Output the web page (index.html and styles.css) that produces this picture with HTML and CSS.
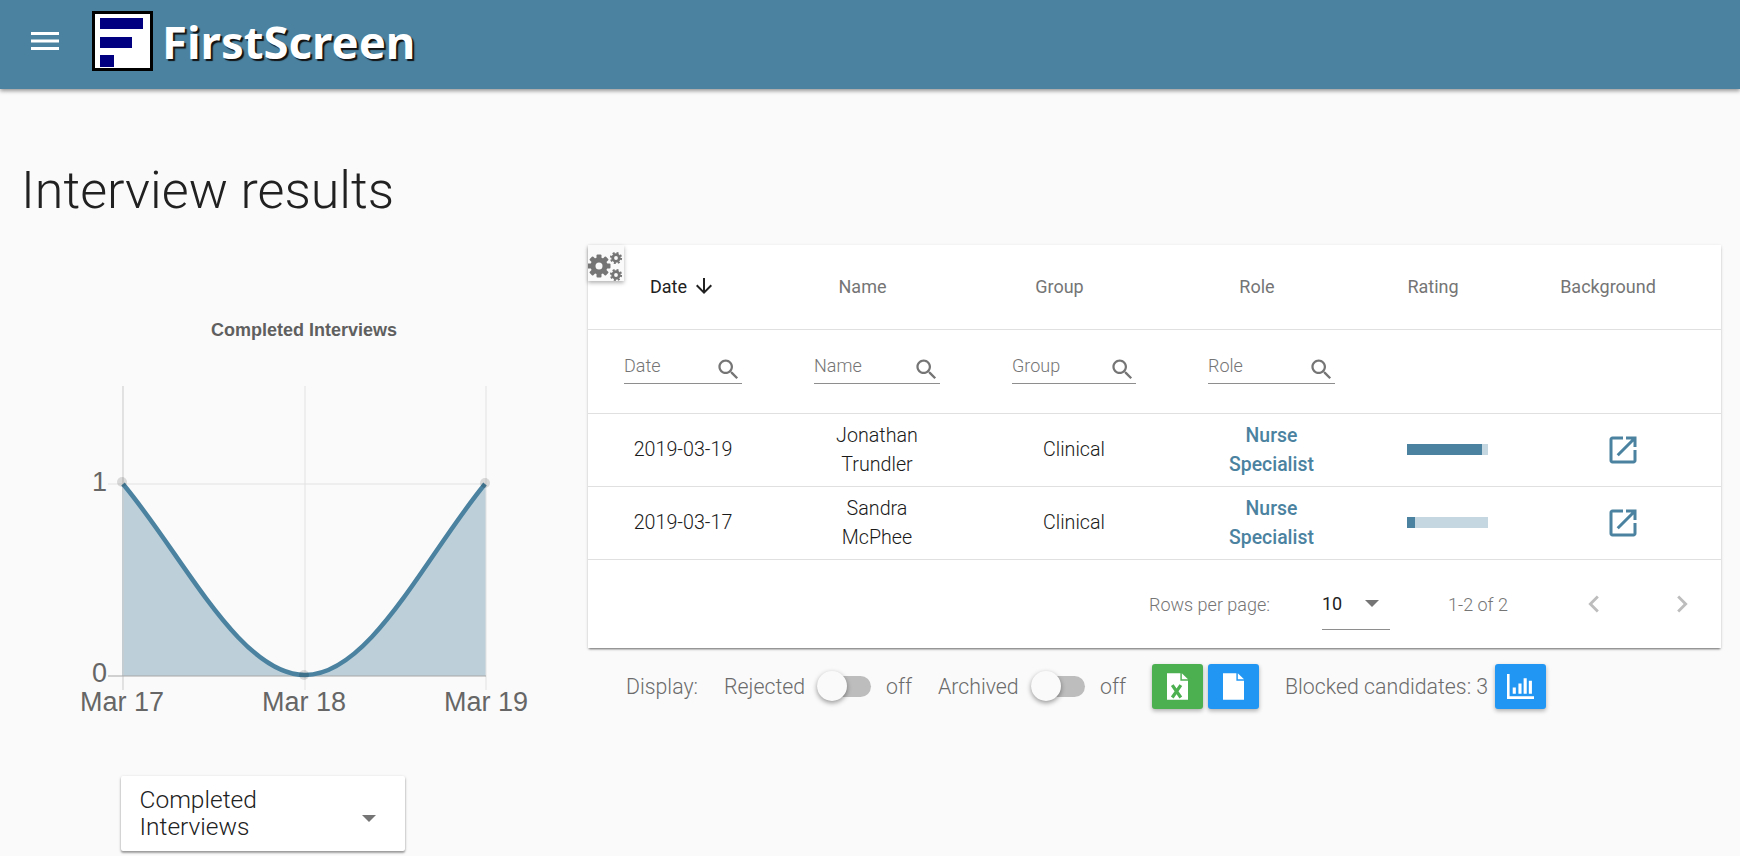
FILE: index.html
```html
<!DOCTYPE html>
<html lang="en">
<head>
<meta charset="utf-8">
<title>Interview results</title>
<link rel="stylesheet" href="styles.css">
</head>
<body>
<header class="appbar">
  <svg class="menu-icon" viewBox="0 0 28 18" aria-hidden="true"><path d="M0 0h28v3H0zM0 7.500h28v3H0zM0 15h28v3H0z" fill="#fff"/></svg>
  <div class="logo-box">
    <svg viewBox="0 0 61 60" class="logo-mark" aria-hidden="true"><rect x="1.500" y="1.500" width="58" height="57" fill="#fff" stroke="#000" stroke-width="3"/><path d="M8 7h43v11H8zM8 26h32v11H8zM8 44h14v12H8z" fill="#000080"/></svg>
  </div>
  <span class="logo-text">FirstScreen</span>
</header>
<main class="page">
  <h1 class="page-title">Interview results</h1>
  <div class="content">
    <section class="chart-col">
      <svg class="chart" viewBox="0 245 588 520" aria-label="Completed Interviews chart">
        <text x="304" y="336" class="chart-title" text-anchor="middle">Completed Interviews</text>
        <path d="M122 484C184 557 240 676 305 676C370 676 425 557 486 484V676H122Z" fill="#bdd0da"/>
        <path d="M123 386V690" stroke="#c9c9c9"/>
        <path d="M305 386V690M486 386V690" stroke="#e2e2e2"/>
        <path d="M108 484H486" stroke="#e2e2e2"/>
        <path d="M108 676H486" stroke="#a6a6a6"/>
        <path d="M123 484C184 557 240 675 305 675C370 675 425 557 485 484" fill="none" stroke="#4a82a0" stroke-width="4.500"/>
        <circle cx="122" cy="482" r="5" fill="#000" fill-opacity=".13"/>
        <circle cx="304" cy="675" r="5" fill="#000" fill-opacity=".13"/>
        <circle cx="485" cy="483" r="5" fill="#000" fill-opacity=".13"/>
        <text x="107" y="491" class="axis" text-anchor="end">1</text>
        <text x="107" y="682" class="axis" text-anchor="end">0</text>
        <text x="122" y="711" class="axis" text-anchor="middle">Mar 17</text>
        <text x="304" y="711" class="axis" text-anchor="middle">Mar 18</text>
        <text x="486" y="711" class="axis" text-anchor="middle">Mar 19</text>
      </svg>
      <div class="metric-select">
        <span class="metric-label">Completed Interviews</span>
        <span class="caret"></span>
      </div>
    </section>
    <section class="table-col">
      <div class="card">
        <button class="gear-btn" type="button" aria-label="Settings">
          <svg viewBox="0 0 36 36" aria-hidden="true">
            <g fill="#757575">
              <circle cx="11" cy="21" r="8.500"/>
              <rect x="8.500" y="9.500" width="5" height="23" rx="1"/>
              <rect x="8.500" y="9.500" width="5" height="23" rx="1" transform="rotate(45 11 21)"/>
              <rect x="8.500" y="9.500" width="5" height="23" rx="1" transform="rotate(90 11 21)"/>
              <rect x="8.500" y="9.500" width="5" height="23" rx="1" transform="rotate(135 11 21)"/>
            </g>
            <circle cx="11" cy="21" r="3.500" fill="#fafafa"/>
            <circle cx="28" cy="13" r="3.300" fill="none" stroke="#757575" stroke-width="2.800"/>
            <circle cx="28" cy="13" r="5.100" fill="none" stroke="#757575" stroke-width="2" stroke-dasharray="2 2"/>
            <circle cx="28" cy="30" r="3.300" fill="none" stroke="#757575" stroke-width="2.800"/>
            <circle cx="28" cy="30" r="5.100" fill="none" stroke="#757575" stroke-width="2" stroke-dasharray="2 2"/>
          </svg>
        </button>
        <table class="grid">
          <colgroup>
            <col class="c-date"><col class="c-name"><col class="c-group"><col class="c-role"><col class="c-rating"><col class="c-bg">
          </colgroup>
          <thead>
            <tr class="head-row">
              <th class="active"><span class="th-in">Date<svg class="sort" viewBox="0 0 24 24" aria-hidden="true"><path d="M20 12l-1.410-1.410L13 16.170V4h-2v12.170l-5.580-5.590L4 12l8 8 8-8z"/></svg></span></th>
              <th><span class="th-in">Name<span class="sort-gap"></span></span></th>
              <th><span class="th-in">Group<span class="sort-gap"></span></span></th>
              <th><span class="th-in">Role<span class="sort-gap"></span></span></th>
              <th><span class="th-in">Rating<span class="sort-gap"></span></span></th>
              <th><span class="th-in">Background<span class="sort-gap"></span></span></th>
            </tr>
            <tr class="filter-row">
              <td><label class="filter f-date"><input placeholder="Date" aria-label="Date"><svg viewBox="0 0 24 24" aria-hidden="true"><use href="#search"/></svg></label></td>
              <td><label class="filter f-name"><input placeholder="Name" aria-label="Name"><svg viewBox="0 0 24 24" aria-hidden="true"><use href="#search"/></svg></label></td>
              <td><label class="filter f-group"><input placeholder="Group" aria-label="Group"><svg viewBox="0 0 24 24" aria-hidden="true"><use href="#search"/></svg></label></td>
              <td><label class="filter f-role"><input placeholder="Role" aria-label="Role"><svg viewBox="0 0 24 24" aria-hidden="true"><use href="#search"/></svg></label></td>
              <td></td>
              <td></td>
            </tr>
          </thead>
          <tbody>
            <tr class="data-row">
              <td>2019-03-19</td>
              <td>Jonathan<br>Trundler</td>
              <td>Clinical</td>
              <td class="role">Nurse<br>Specialist</td>
              <td><div class="rating"><div class="rating-fill fill-high"></div></div></td>
              <td><svg class="open-icon" viewBox="0 0 24 24" aria-hidden="true"><use href="#open"/></svg></td>
            </tr>
            <tr class="data-row">
              <td>2019-03-17</td>
              <td>Sandra<br>McPhee</td>
              <td>Clinical</td>
              <td class="role">Nurse<br>Specialist</td>
              <td><div class="rating"><div class="rating-fill fill-low"></div></div></td>
              <td><svg class="open-icon" viewBox="0 0 24 24" aria-hidden="true"><use href="#open"/></svg></td>
            </tr>
          </tbody>
        </table>
        <div class="pager">
          <span class="pager-label">Rows per page:</span>
          <span class="pager-select"><span class="pager-value">10</span><span class="caret"></span></span>
          <span class="pager-range">1-2 of 2</span>
          <svg class="chev chev-l" viewBox="0 0 24 24" aria-hidden="true"><path d="M15.410 7.410L14 6l-6 6 6 6 1.410-1.410L10.830 12z"/></svg>
          <svg class="chev chev-r" viewBox="0 0 24 24" aria-hidden="true"><path d="M10 6L8.590 7.410 13.170 12l-4.580 4.590L10 18l6-6z"/></svg>
        </div>
      </div>
      <div class="toolbar">
        <span class="display-label">Display:</span>
        <span class="tog-label">Rejected</span>
        <span class="switch"><span class="thumb"></span></span>
        <span class="off">off</span>
        <span class="tog-label arch">Archived</span>
        <span class="switch"><span class="thumb"></span></span>
        <span class="off">off</span>
        <button class="btn green first" type="button" aria-label="Export Excel">
          <svg viewBox="1 0 22 28" aria-hidden="true"><path d="M1 0h14v8h8v20H1z" fill="#fff"/><path d="M16.500 0L23 6.500h-6.500z" fill="#fff"/><path d="M6.500 12.500l9 13M15.500 12.500l-9 13" stroke="#4caf50" stroke-width="3.400" fill="none"/></svg>
        </button>
        <button class="btn blue" type="button" aria-label="Export file">
          <svg viewBox="1 0 22 28" aria-hidden="true"><path d="M1 0h14v8h8v20H1z" fill="#fff"/><path d="M16.500 0L23 6.500h-6.500z" fill="#fff"/></svg>
        </button>
        <span class="blocked">Blocked candidates: 3</span>
        <button class="btn blue" type="button" aria-label="Blocked candidates chart">
          <svg class="bars" viewBox="0 0 26 24" aria-hidden="true"><path d="M0 0h2.500v21.500H26V24H0zM5.500 13h3v6h-3zM11 9h3v10h-3zM16 4h3v15h-3zM21 6.500h3V19h-3z" fill="#fff"/></svg>
        </button>
      </div>
    </section>
  </div>
</main>
<svg class="defs" aria-hidden="true">
  <defs>
    <path id="search" d="M15.500 14h-.790l-.280-.270C15.410 12.590 16 11.110 16 9.500 16 5.910 13.090 3 9.500 3S3 5.910 3 9.500 5.910 16 9.500 16c1.610 0 3.090-.590 4.230-1.570l.270.280v.790l5 4.990L20.490 19l-4.990-5zm-6 0C7.010 14 5 11.990 5 9.500S7.010 5 9.500 5 14 7.010 14 9.500 11.990 14 9.500 14z"/>
    <path id="open" d="M19 19H5V5h7V3H5c-1.110 0-2 .900-2 2v14c0 1.100.890 2 2 2h14c1.100 0 2-.900 2-2v-7h-2v7zM14 3v2h3.590l-9.830 9.830 1.410 1.410L19 6.410V10h2V3h-7z"/>
  </defs>
</svg>
</body>
</html>
```
FILE: styles.css
```css
* { box-sizing: border-box; }
html, body { margin: 0; padding: 0; }
body {
  background: #fafafa;
  font-family: Roboto, "Liberation Sans", sans-serif;
  color: #212121;
  height: 856px;
  overflow: hidden;
}
.defs { width: 0; height: 0; position: absolute; }

.appbar {
  height: 89px;
  background: #4a82a0;
  box-shadow: 0 2px 4px rgba(0,0,0,.4);
  display: flex;
  align-items: flex-start;
  padding-left: 31px;
  position: relative;
}
.menu-icon { width: 28px; height: 18px; margin-top: 32px; }
.logo-box { margin-left: 33px; margin-top: 11px; width: 61px; height: 60px; }
.logo-mark { display: block; width: 61px; height: 60px; }
.logo-text {
  margin-left: 9px;
  margin-top: 13px;
  font-family: "Noto Sans", "Liberation Sans", sans-serif;
  font-weight: 700;
  font-size: 45.500px;
  line-height: 56px;
  color: #fff;
  text-shadow: 2px 2px 1px #111;
}

.page-title {
  margin: 0;
  padding: 0 0 24px 21px;
  height: 156px;
  display: flex;
  align-items: flex-end;
  font-weight: 300;
  font-size: 52px;
  line-height: 60px;
  color: #212121;
}

.content { display: flex; align-items: flex-start; }
.chart-col { width: 588px; flex: none; }
.chart { display: block; width: 588px; height: 520px; }
.chart-title { font: 700 18px "Liberation Sans", Arial, sans-serif; fill: #5f5f5f; }
.axis { font: 27px "Liberation Sans", Arial, sans-serif; fill: #666; }

.metric-select {
  margin: 11px 0 0 121px;
  width: 284px;
  height: 75px;
  background: #fff;
  border-radius: 2px;
  box-shadow: 0 1px 3px rgba(0,0,0,.25), 0 2px 2px rgba(0,0,0,.25);
  padding: 10px 29px 0 18.500px;
  display: flex;
  justify-content: space-between;
  align-items: center;
}
.metric-label {
  width: 170px;
  font-size: 24.500px;
  line-height: 27px;
  font-weight: 300;
  margin-top: -12px;
}
.caret {
  display: block;
  width: 0;
  height: 0;
  border-left: 7.500px solid transparent;
  border-right: 7.500px solid transparent;
  border-top: 7.500px solid #757575;
}

.table-col { flex: none; width: 1133px; }
.card {
  position: relative;
  background: #fff;
  box-shadow: 0 1px 3px rgba(0,0,0,.15), 0 2px 2px -1px rgba(0,0,0,.5);
}
.gear-btn {
  position: absolute;
  left: 0;
  top: 0;
  width: 36px;
  height: 36px;
  padding: 0;
  border: 0;
  background: #fafafa;
  box-shadow: 0 2px 4px rgba(0,0,0,.3);
  overflow: hidden;
}
.gear-btn svg { display: block; width: 36px; height: 36px; }

.grid { width: 1133px; table-layout: fixed; border-collapse: collapse; text-align: center; }
.c-date { width: 190px; }
.c-name { width: 198px; }
.c-group { width: 196px; }
.c-role { width: 199px; }
.c-rating { width: 153px; }
.c-bg { width: 197px; }
.head-row { height: 84px; border-bottom: 1px solid #e0e0e0; }
.head-row th { padding: 0; font-weight: 400; font-size: 18px; color: #757575; }
.head-row th.active { color: #212121; }
.th-in { display: inline-flex; align-items: center; height: 24px; margin-top: -6px; }
.sort { width: 24px; height: 24px; margin-left: 5px; fill: #212121; }
.sort-gap { width: 29px; }
.filter-row { height: 84px; border-bottom: 1px solid #e0e0e0; }
.filter-row td { padding: 0; }
.filter {
  display: inline-flex;
  align-items: flex-end;
  justify-content: space-between;
  height: 30px;
  border-bottom: 1px solid #8e8e8e;
  margin-top: -5px;
  vertical-align: middle;
}
.f-date { width: 118px; }
.f-name { width: 126px; }
.f-group { width: 124px; }
.f-role { width: 127px; }
.filter input {
  flex: 1;
  min-width: 0;
  border: 0;
  outline: 0;
  padding: 0;
  background: none;
  font: 300 18px Roboto, sans-serif;
  height: 26px;
  margin-bottom: 4px;
}
.filter input::placeholder { color: #757575; opacity: 1; }
.filter svg { width: 27px; height: 27px; fill: #757575; margin-bottom: 0; flex: none; }
.data-row { height: 73px; border-bottom: 1px solid #e0e0e0; }
.data-row td { padding: 0; font-size: 19.700px; line-height: 29px; color: #1a1a1a; font-weight: 300; }
.data-row td.role { color: #4a82a0; font-weight: 500; font-size: 19.400px; }
.rating { width: 81px; height: 11px; margin: 0 auto; background: #c5d8e1; }
.rating-fill { height: 11px; background: #4a82a0; }
.fill-high { width: 75px; }
.fill-low { width: 8px; }
.open-icon { display: block; width: 36px; height: 36px; margin: 0 auto; fill: #4a82a0; }

.pager { height: 88px; padding-top: 1px; display: flex; align-items: center; font-size: 18px; font-weight: 300; color: #757575; }
.pager-label { margin-left: 561px; width: 173px; }
.pager-select {
  width: 68px;
  height: 52px;
  display: flex;
  align-items: center;
  border-bottom: 1px solid #8e8e8e;
}
.pager-value { color: #212121; width: 43px; font-weight: 400; }
.pager-range { margin-left: 58px; width: 129px; }
.chev { width: 34px; height: 34px; fill: #bdbdbd; flex: none; }
.chev-r { margin-left: 54px; }

.toolbar {
  margin-top: 16px;
  padding-left: 38px;
  height: 45px;
  display: flex;
  align-items: center;
  font-size: 21.300px;
  font-weight: 300;
  color: #6b6b6b;
}
.display-label { width: 98px; }
.tog-label { width: 93px; }
.arch { margin-left: 26px; }
.switch {
  position: relative;
  width: 54px;
  height: 21px;
  background: #bdbdbd;
  border-radius: 11px;
  flex: none;
}
.thumb {
  position: absolute;
  left: 0;
  top: -5px;
  width: 30px;
  height: 30px;
  border-radius: 50%;
  background: #fafafa;
  box-shadow: 0 2px 5px rgba(0,0,0,.4);
}
.off { margin-left: 15px; width: 26px; }
.btn {
  width: 51px;
  height: 45px;
  border: 0;
  border-radius: 3px;
  padding: 0;
  display: flex;
  align-items: center;
  justify-content: center;
  box-shadow: 0 2px 4px rgba(0,0,0,.3);
  flex: none;
}
.btn svg { width: 21px; height: 27px; }
.btn svg.bars { width: 27px; height: 25px; }
.green { background: #4caf50; }
.blue { background: #2196f3; margin-left: 5px; }
.first { margin-left: 26px; }
.blocked { margin-left: 26px; width: 205px; }
```
